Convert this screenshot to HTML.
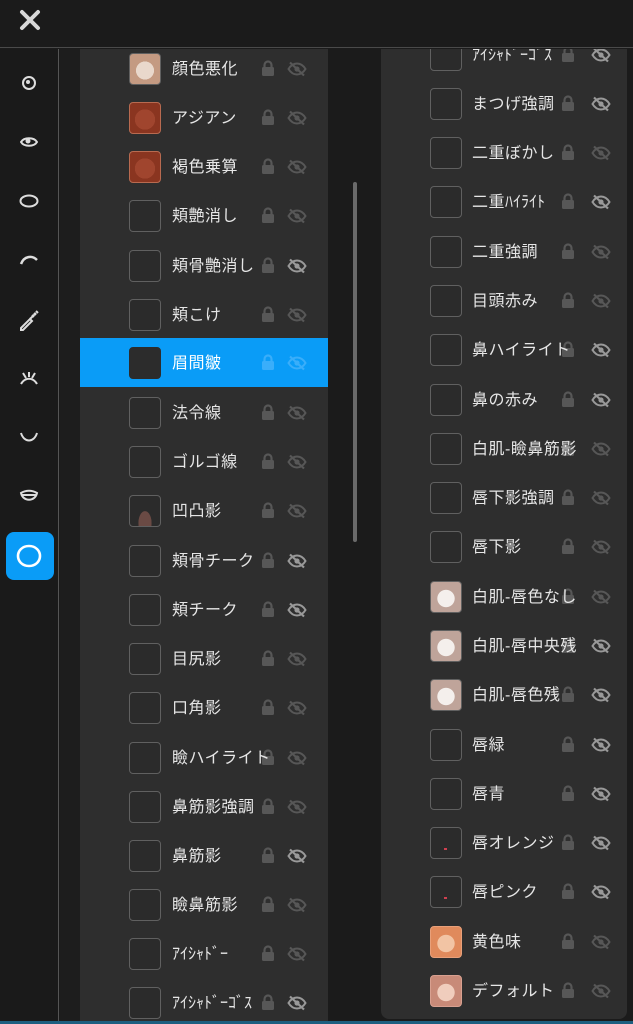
<!DOCTYPE html>
<html><head><meta charset="utf-8"><style>
*{margin:0;padding:0;box-sizing:border-box}
body{width:633px;height:1024px;background:#1b1b1b;overflow:hidden;position:relative;font-family:"Liberation Sans","Noto Sans CJK JP",sans-serif}
.top{position:absolute;left:0;top:0;width:633px;height:48px;background:#1b1b1b;border-bottom:1px solid #4a4a4a}
.side{position:absolute;left:0;top:49px;width:59px;height:975px;background:#1a1a1a;border-right:1px solid #555}
.gap{position:absolute;left:60px;top:49px;width:20px;height:975px;background:#1d1d1d}
.p1{position:absolute;left:80px;top:49px;width:248px;height:975px;background:#2e2e2e;overflow:hidden}
.p2{position:absolute;left:381px;top:49px;width:246px;height:970px;background:#2e2e2e;overflow:hidden;border-radius:0 0 8px 8px}
.r{position:absolute;left:0;width:248px;height:49px}
.r.sel{background:#0a9cf7}
.th{position:absolute;left:49px;top:9px;width:32px;height:32px;border:1.5px solid #606060;border-radius:4px;background:#2b2b2b}
.sel .th{background:#2c2c2c;border-color:#2c2c2c}
.t{position:absolute;left:92px;top:11px;font-size:16px;color:#e6e6e6;white-space:nowrap;z-index:2;letter-spacing:0.5px}
.h{font-size:16px;letter-spacing:0}
.lk{position:absolute;left:181px;top:16px}
.ey{position:absolute;left:207px;top:17px}
.p2 .th{left:49px}.p2 .t{left:91px}.p2 .lk{left:180px}.p2 .ey{left:210px}
.f1{background:radial-gradient(circle at 50% 55%,#e9d8cc 0 40%,#c49a82 41%)}
.f2{background:radial-gradient(circle at 50% 55%,#a0452e 0 45%,#8a3520 46%);border-color:#b86a50}
.fw{background:radial-gradient(circle at 50% 55%,#f4efec 0 38%,#bfa49a 40%)}
.fo{background:radial-gradient(circle at 50% 55%,#f2c4a4 0 38%,#e08a5c 40%);border-color:#e8a07a}
.fd{background:radial-gradient(circle at 50% 55%,#f0cdbd 0 38%,#c88a78 40%);border-color:#d8a090}
.dot:after{content:"";position:absolute;left:13px;top:20px;width:3px;height:2px;background:#d04050}
.ic{position:absolute;left:29px;transform:translate(-50%,-50%)}
</style></head><body>
<svg style="position:absolute;display:none">
<defs>
<symbol id="L" viewBox="0 0 14 16"><path d="M3.5 8V5a3.5 3.5 0 0 1 7 0v3" fill="none" stroke="currentColor" stroke-width="2.2"/><rect x="1" y="7" width="12" height="9" rx="1.5" fill="currentColor"/></symbol>
<symbol id="E" viewBox="0 0 20 16"><path d="M1.5 8C4 4 7 2.5 10 2.5S16 4 18.5 8C16 12 13 13.5 10 13.5S4 12 1.5 8Z" fill="none" stroke="currentColor" stroke-width="2"/><circle cx="10" cy="8" r="2.6" fill="currentColor"/><path d="M3 1.5L17 14.5" stroke="currentColor" stroke-width="2.2"/></symbol>
</defs></svg>
<div class="top"><svg style="position:absolute;left:19px;top:9px" width="22" height="22" viewBox="0 0 22 22"><path d="M3 3L19 19M19 3L3 19" stroke="#d8d8d8" stroke-width="4" stroke-linecap="round"/></svg></div>
<div class="side">
<svg class="ic" style="top:34px" width="16" height="16" viewBox="0 0 16 16"><circle cx="8" cy="8" r="6" fill="none" stroke="#ddd" stroke-width="2"/><circle cx="7" cy="7" r="2" fill="#ddd"/></svg>
<svg class="ic" style="top:93px" width="18" height="14" viewBox="0 0 18 14"><path d="M1 7C4 2 14 2 17 7C14 12 4 12 1 7Z" fill="none" stroke="#ddd" stroke-width="2"/><circle cx="8" cy="6" r="2.5" fill="#ddd"/></svg>
<svg class="ic" style="top:152px" width="20" height="14" viewBox="0 0 20 14"><ellipse cx="10" cy="7" rx="8.5" ry="5.5" fill="none" stroke="#ddd" stroke-width="2"/></svg>
<svg class="ic" style="top:211px" width="20" height="12" viewBox="0 0 20 12"><path d="M2 10C5 2 13 1 18 6" fill="none" stroke="#ddd" stroke-width="2.5"/></svg>
<svg class="ic" style="top:271px" width="22" height="22" viewBox="0 0 22 22"><path d="M3 19L12 10l2 2-9 9H3Z" fill="none" stroke="#ddd" stroke-width="2"/><path d="M12 10l6-6M14 6l2 2M16 4l2 2M18 2l2 2" stroke="#ddd" stroke-width="2"/></svg>
<svg class="ic" style="top:330px" width="20" height="16" viewBox="0 0 20 16"><path d="M2 13C6 6 14 6 18 13M4 2l3 5M16 2l-3 5M10 1v5" fill="none" stroke="#ddd" stroke-width="2"/></svg>
<svg class="ic" style="top:388px" width="20" height="12" viewBox="0 0 20 12"><path d="M2 2C5 12 15 12 18 2" fill="none" stroke="#ddd" stroke-width="2"/></svg>
<svg class="ic" style="top:447px" width="20" height="14" viewBox="0 0 20 14"><path d="M2 4C7 1 13 1 18 4C16 13 4 13 2 4ZM3 6h14" fill="none" stroke="#ddd" stroke-width="2"/></svg>
<div style="position:absolute;left:6px;top:483px;width:48px;height:48px;border-radius:8px;background:#0a9cf7"></div>
<svg class="ic" style="top:507px" width="26" height="24" viewBox="0 0 26 24"><path d="M13 2C20 2 24 7 24 12S20 22 13 22 2 17 2 12 6 2 13 2Z" fill="none" stroke="#fff" stroke-width="2.6"/></svg>
</div>
<div class="gap"></div>
<div style="position:absolute;left:353px;top:182px;width:4px;height:360px;background:#6a6a6a;border-radius:2px"></div>

<div class="p1" style="color:#575757">
<div class="r" style="top:-5px"><div class="th f1"></div><span class="t">顔色悪化</span><svg class="lk" width="14" height="16"><use href="#L"/></svg><svg class="ey" width="20" height="16"><use href="#E"/></svg></div>
<div class="r" style="top:44px"><div class="th f2"></div><span class="t">アジアン</span><svg class="lk" width="14" height="16"><use href="#L"/></svg><svg class="ey" width="20" height="16"><use href="#E"/></svg></div>
<div class="r" style="top:93px"><div class="th f2"></div><span class="t">褐色乗算</span><svg class="lk" width="14" height="16"><use href="#L"/></svg><svg class="ey" width="20" height="16"><use href="#E"/></svg></div>
<div class="r" style="top:142px"><div class="th"></div><span class="t">頬艶消し</span><svg class="lk" width="14" height="16"><use href="#L"/></svg><svg class="ey" width="20" height="16"><use href="#E"/></svg></div>
<div class="r" style="top:192px"><div class="th"></div><span class="t">頬骨艶消し</span><svg class="lk" width="14" height="16"><use href="#L"/></svg><svg class="ey" width="20" height="16" style="color:#999"><use href="#E"/></svg></div>
<div class="r" style="top:241px"><div class="th"></div><span class="t">頬こけ</span><svg class="lk" width="14" height="16"><use href="#L"/></svg><svg class="ey" width="20" height="16"><use href="#E"/></svg></div>
<div class="r sel" style="top:289px;color:#3aaefa"><div class="th"></div><span class="t" style="color:#fff">眉間皺</span><svg class="lk" width="14" height="16"><use href="#L"/></svg><svg class="ey" width="20" height="16"><use href="#E"/></svg></div>
<div class="r" style="top:339px"><div class="th"></div><span class="t">法令線</span><svg class="lk" width="14" height="16"><use href="#L"/></svg><svg class="ey" width="20" height="16"><use href="#E"/></svg></div>
<div class="r" style="top:388px"><div class="th"></div><span class="t">ゴルゴ線</span><svg class="lk" width="14" height="16"><use href="#L"/></svg><svg class="ey" width="20" height="16"><use href="#E"/></svg></div>
<div class="r" style="top:437px"><div class="th" style="background:radial-gradient(ellipse at 50% 90%,#6a4a44 0 30%,#2b2b2b 32%)"></div><span class="t">凹凸影</span><svg class="lk" width="14" height="16"><use href="#L"/></svg><svg class="ey" width="20" height="16"><use href="#E"/></svg></div>
<div class="r" style="top:487px"><div class="th"></div><span class="t">頬骨チーク</span><svg class="lk" width="14" height="16"><use href="#L"/></svg><svg class="ey" width="20" height="16" style="color:#999"><use href="#E"/></svg></div>
<div class="r" style="top:536px"><div class="th"></div><span class="t">頬チーク</span><svg class="lk" width="14" height="16"><use href="#L"/></svg><svg class="ey" width="20" height="16" style="color:#999"><use href="#E"/></svg></div>
<div class="r" style="top:585px"><div class="th"></div><span class="t">目尻影</span><svg class="lk" width="14" height="16"><use href="#L"/></svg><svg class="ey" width="20" height="16"><use href="#E"/></svg></div>
<div class="r" style="top:634px"><div class="th"></div><span class="t">口角影</span><svg class="lk" width="14" height="16"><use href="#L"/></svg><svg class="ey" width="20" height="16"><use href="#E"/></svg></div>
<div class="r" style="top:684px"><div class="th"></div><span class="t">瞼ハイライト</span><svg class="lk" width="14" height="16"><use href="#L"/></svg><svg class="ey" width="20" height="16"><use href="#E"/></svg></div>
<div class="r" style="top:733px"><div class="th"></div><span class="t">鼻筋影強調</span><svg class="lk" width="14" height="16"><use href="#L"/></svg><svg class="ey" width="20" height="16"><use href="#E"/></svg></div>
<div class="r" style="top:782px"><div class="th"></div><span class="t">鼻筋影</span><svg class="lk" width="14" height="16"><use href="#L"/></svg><svg class="ey" width="20" height="16" style="color:#999"><use href="#E"/></svg></div>
<div class="r" style="top:831px"><div class="th"></div><span class="t">瞼鼻筋影</span><svg class="lk" width="14" height="16"><use href="#L"/></svg><svg class="ey" width="20" height="16"><use href="#E"/></svg></div>
<div class="r" style="top:880px"><div class="th"></div><span class="t h">ｱｲｼｬﾄﾞｰ</span><svg class="lk" width="14" height="16"><use href="#L"/></svg><svg class="ey" width="20" height="16"><use href="#E"/></svg></div>
<div class="r" style="top:929px"><div class="th"></div><span class="t h">ｱｲｼｬﾄﾞｰｺﾞｽ</span><svg class="lk" width="14" height="16"><use href="#L"/></svg><svg class="ey" width="20" height="16" style="color:#999"><use href="#E"/></svg></div>
</div>

<div class="p2" style="color:#575757">
<div class="r" style="top:-19px"><div class="th"></div><span class="t h">ｱｲｼｬﾄﾞｰｺﾞｽ</span><svg class="lk" width="14" height="16"><use href="#L"/></svg><svg class="ey" width="20" height="16" style="color:#999"><use href="#E"/></svg></div>
<div class="r" style="top:30px"><div class="th"></div><span class="t">まつげ強調</span><svg class="lk" width="14" height="16"><use href="#L"/></svg><svg class="ey" width="20" height="16" style="color:#999"><use href="#E"/></svg></div>
<div class="r" style="top:79px"><div class="th"></div><span class="t">二重ぼかし</span><svg class="lk" width="14" height="16"><use href="#L"/></svg><svg class="ey" width="20" height="16"><use href="#E"/></svg></div>
<div class="r" style="top:128px"><div class="th"></div><span class="t">二重<span class="h">ﾊｲﾗｲﾄ</span></span><svg class="lk" width="14" height="16"><use href="#L"/></svg><svg class="ey" width="20" height="16" style="color:#999"><use href="#E"/></svg></div>
<div class="r" style="top:178px"><div class="th"></div><span class="t">二重強調</span><svg class="lk" width="14" height="16"><use href="#L"/></svg><svg class="ey" width="20" height="16"><use href="#E"/></svg></div>
<div class="r" style="top:227px"><div class="th"></div><span class="t">目頭赤み</span><svg class="lk" width="14" height="16"><use href="#L"/></svg><svg class="ey" width="20" height="16"><use href="#E"/></svg></div>
<div class="r" style="top:276px"><div class="th"></div><span class="t">鼻ハイライト</span><svg class="lk" width="14" height="16"><use href="#L"/></svg><svg class="ey" width="20" height="16" style="color:#999"><use href="#E"/></svg></div>
<div class="r" style="top:326px"><div class="th"></div><span class="t">鼻の赤み</span><svg class="lk" width="14" height="16"><use href="#L"/></svg><svg class="ey" width="20" height="16" style="color:#999"><use href="#E"/></svg></div>
<div class="r" style="top:375px"><div class="th"></div><span class="t">白肌-瞼鼻筋影</span><svg class="lk" width="14" height="16"><use href="#L"/></svg><svg class="ey" width="20" height="16"><use href="#E"/></svg></div>
<div class="r" style="top:424px"><div class="th"></div><span class="t">唇下影強調</span><svg class="lk" width="14" height="16"><use href="#L"/></svg><svg class="ey" width="20" height="16"><use href="#E"/></svg></div>
<div class="r" style="top:473px"><div class="th"></div><span class="t">唇下影</span><svg class="lk" width="14" height="16"><use href="#L"/></svg><svg class="ey" width="20" height="16"><use href="#E"/></svg></div>
<div class="r" style="top:523px"><div class="th fw"></div><span class="t">白肌-唇色なし</span><svg class="lk" width="14" height="16"><use href="#L"/></svg><svg class="ey" width="20" height="16"><use href="#E"/></svg></div>
<div class="r" style="top:572px"><div class="th fw"></div><span class="t">白肌-唇中央残</span><svg class="lk" width="14" height="16"><use href="#L"/></svg><svg class="ey" width="20" height="16" style="color:#999"><use href="#E"/></svg></div>
<div class="r" style="top:621px"><div class="th fw"></div><span class="t">白肌-唇色残</span><svg class="lk" width="14" height="16"><use href="#L"/></svg><svg class="ey" width="20" height="16" style="color:#999"><use href="#E"/></svg></div>
<div class="r" style="top:671px"><div class="th"></div><span class="t">唇緑</span><svg class="lk" width="14" height="16"><use href="#L"/></svg><svg class="ey" width="20" height="16" style="color:#999"><use href="#E"/></svg></div>
<div class="r" style="top:720px"><div class="th"></div><span class="t">唇青</span><svg class="lk" width="14" height="16"><use href="#L"/></svg><svg class="ey" width="20" height="16" style="color:#999"><use href="#E"/></svg></div>
<div class="r" style="top:769px"><div class="th dot"></div><span class="t">唇オレンジ</span><svg class="lk" width="14" height="16"><use href="#L"/></svg><svg class="ey" width="20" height="16" style="color:#999"><use href="#E"/></svg></div>
<div class="r" style="top:818px"><div class="th dot"></div><span class="t">唇ピンク</span><svg class="lk" width="14" height="16"><use href="#L"/></svg><svg class="ey" width="20" height="16" style="color:#999"><use href="#E"/></svg></div>
<div class="r" style="top:868px"><div class="th fo"></div><span class="t">黄色味</span><svg class="lk" width="14" height="16"><use href="#L"/></svg><svg class="ey" width="20" height="16"><use href="#E"/></svg></div>
<div class="r" style="top:917px"><div class="th fd"></div><span class="t">デフォルト</span><svg class="lk" width="14" height="16"><use href="#L"/></svg><svg class="ey" width="20" height="16"><use href="#E"/></svg></div>
</div>
<div style="position:absolute;left:0;top:1021px;width:633px;height:3px;background:#1d5f80"></div>
</body></html>
